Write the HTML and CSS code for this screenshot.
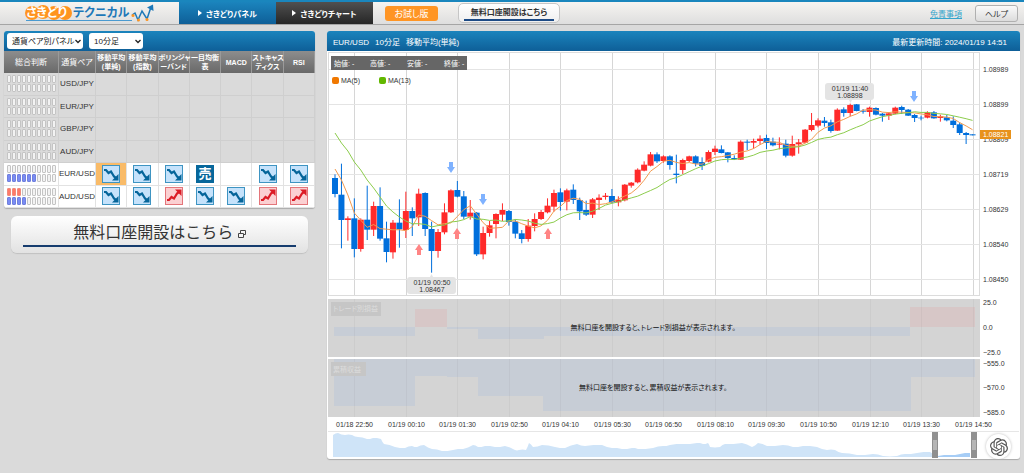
FILE: index.html
```
<!DOCTYPE html>
<html lang="ja">
<head>
  <meta charset="UTF-8" />
  <meta name="viewport" content="width=device-width, initial-scale=1.0" />
  <title>さきどりテクニカル</title>
  <link rel="stylesheet" href="styles.css">
</head>
<body>
  <svg class="symbols" aria-hidden="true">
    <symbol id="down" viewBox="0 0 18 18">
      <rect x="0.5" y="0.5" width="17" height="17" fill="#c5e2fb" stroke="#3e94c2"/>
      <path d="M2 5H4L6.500 8L9 6.500L12 11.500L14 13" fill="none" stroke="#05659a" stroke-width="2.200"/>
      <path d="M16.500 9V15.500H10Z" fill="#05659a"/>
    </symbol>
    <symbol id="up" viewBox="0 0 18 18">
      <rect x="0.5" y="0.5" width="17" height="17" fill="#fbd0d2" stroke="#e4757a"/>
      <path d="M2 13H4L6.500 10L9 11.500L12 6.500L14 5" fill="none" stroke="#dc1c26" stroke-width="2.200"/>
      <path d="M16.500 9V2.500H10Z" fill="#dc1c26"/>
    </symbol>
  </svg>

  <header class="topbar">
    <a class="logo" href="#" aria-label="さきどりテクニカル">
      <svg width="132" height="20" viewBox="0 0 132 20">
        <path d="M4 17.500H110" stroke="#4a9ad0" stroke-width="1"/>
        <g fill="#ff941f"><circle cx="10" cy="10" r="7"/><circle cx="21" cy="9" r="7"/><circle cx="32" cy="10" r="7"/><circle cx="43" cy="10" r="7"/></g>
        <text class="logo-a" x="4" y="14">さきどり</text>
        <text class="logo-b" x="51" y="14">テクニカル</text>
        <path d="M110 12L113 10L116 17L120 8L125 16L129 4" fill="none" stroke="#1d78b8" stroke-width="1.500"/>
        <path d="M125 4.500L131 1.500L131.500 8Z" fill="#1d78b8"/>
        <g fill="#ff941f"><circle cx="111" cy="12.500" r="1.500"/><circle cx="116.500" cy="17" r="1.500"/><circle cx="125" cy="16.500" r="1.500"/></g>
      </svg>
    </a>
    <nav class="tabs">
      <a class="tab tab-on" href="#"><span class="tri"></span>さきどりパネル</a>
      <a class="tab" href="#"><span class="tri"></span>さきどりチャート</a>
    </nav>
    <button class="trial">お試し版</button>
    <button class="open-small"><span>無料口座開設はこちら</span></button>
    <a class="terms" href="#">免責事項</a>
    <button class="help">ヘルプ</button>
  </header>

  <main class="layout">
    <aside class="side">
      <section class="panel">
        <div class="bar filters">
          <select class="sel sel-panel" aria-label="パネル"><option>通貨ペア別パネル</option></select>
          <select class="sel sel-time" aria-label="足種"><option>10分足</option></select>
        </div>
        <table class="signals">
          <colgroup><col class="c-total"><col class="c-pair"><col><col><col><col><col><col><col></colgroup>
          <thead>
            <tr>
              <th class="big">総合判断</th><th class="big">通貨ペア</th><th>移動平均<br>(単純)</th><th>移動平均<br>(指数)</th>
              <th>ボリンジャ<br>ーバンド</th><th>一目均衡<br>表</th><th>MACD</th><th>ストキャス<br>ティクス</th><th>RSI</th>
            </tr>
          </thead>
          <tbody>
            <tr class="off"><td><div class="meter" data-buy="0" data-sell="0"></div></td><td>USD/JPY</td><td></td><td></td><td></td><td></td><td></td><td></td><td></td></tr>
            <tr class="off"><td><div class="meter" data-buy="0" data-sell="0"></div></td><td>EUR/JPY</td><td></td><td></td><td></td><td></td><td></td><td></td><td></td></tr>
            <tr class="off"><td><div class="meter" data-buy="0" data-sell="0"></div></td><td>GBP/JPY</td><td></td><td></td><td></td><td></td><td></td><td></td><td></td></tr>
            <tr class="off"><td><div class="meter" data-buy="0" data-sell="0"></div></td><td>AUD/JPY</td><td></td><td></td><td></td><td></td><td></td><td></td><td></td></tr>
            <tr>
              <td><div class="meter" data-buy="0" data-sell="6"></div></td><td>EUR/USD</td>
              <td class="picked"><svg class="sig"><use href="#down"/></svg></td>
              <td><svg class="sig"><use href="#down"/></svg></td>
              <td><svg class="sig"><use href="#down"/></svg></td>
              <td><span class="sell">売</span></td>
              <td></td>
              <td><svg class="sig"><use href="#down"/></svg></td>
              <td><svg class="sig"><use href="#down"/></svg></td>
            </tr>
            <tr>
              <td><div class="meter" data-buy="3" data-sell="4"></div></td><td>AUD/USD</td>
              <td><svg class="sig"><use href="#down"/></svg></td>
              <td><svg class="sig"><use href="#down"/></svg></td>
              <td><svg class="sig"><use href="#up"/></svg></td>
              <td><svg class="sig"><use href="#down"/></svg></td>
              <td><svg class="sig"><use href="#down"/></svg></td>
              <td><svg class="sig"><use href="#up"/></svg></td>
              <td><svg class="sig"><use href="#up"/></svg></td>
            </tr>
          </tbody>
        </table>
      </section>
      <a class="open-big" href="#">
        <span class="open-text">無料口座開設はこちら
          <svg width="8" height="8" viewBox="0 0 8 8" fill="#f4f4f4" stroke="#444"><path d="M2.500 0.500H7.500V4.500H2.500Z"/><path d="M0.500 3.500H5.500V7.500H0.500Z"/></svg>
        </span>
      </a>
    </aside>

    <section class="panel chart-panel">
      <div class="bar chart-head">
        <h1><span>EUR/USD</span><span>10分足</span><span>移動平均(単純)</span></h1>
        <p>最新更新時間: <time>2024/01/19 14:51</time></p>
      </div>
      <svg id="chart" class="chart" viewBox="327 51 693 408"></svg>
      <button class="chat" aria-label="チャット">
        <svg width="18" height="18" viewBox="0 0 24 24" fill="#555"><path d="M22.2819 9.8211a5.9847 5.9847 0 0 0-.5157-4.9108 6.0462 6.0462 0 0 0-6.5098-2.9A6.0651 6.0651 0 0 0 4.9807 4.1818a5.9847 5.9847 0 0 0-3.9977 2.9 6.0462 6.0462 0 0 0 .7427 7.0966 5.98 5.98 0 0 0 .511 4.9107 6.051 6.051 0 0 0 6.5146 2.9001A5.9847 5.9847 0 0 0 13.2599 24a6.0557 6.0557 0 0 0 5.7718-4.2058 5.9894 5.9894 0 0 0 3.9977-2.9001 6.0557 6.0557 0 0 0-.7475-7.0729zm-9.022 12.6081a4.4755 4.4755 0 0 1-2.8764-1.0408l.1419-.0804 4.7783-2.7582a.7948.7948 0 0 0 .3927-.6813v-6.7369l2.02 1.1686a.071.071 0 0 1 .038.052v5.5826a4.504 4.504 0 0 1-4.4945 4.4944zm-9.6607-4.1254a4.4708 4.4708 0 0 1-.5346-3.0137l.142.0852 4.783 2.7582a.7712.7712 0 0 0 .7806 0l5.8428-3.3685v2.3324a.0804.0804 0 0 1-.0332.0615L9.74 19.9502a4.4992 4.4992 0 0 1-6.1408-1.6464zM2.3408 7.8956a4.485 4.485 0 0 1 2.3655-1.9728V11.6a.7664.7664 0 0 0 .3879.6765l5.8144 3.3543-2.0201 1.1685a.0757.0757 0 0 1-.071 0l-4.8303-2.7865A4.504 4.504 0 0 1 2.3408 7.872zm16.5963 3.8558L13.1038 8.364 15.1192 7.2a.0757.0757 0 0 1 .071 0l4.8303 2.7913a4.4944 4.4944 0 0 1-.6765 8.1042v-5.6772a.79.79 0 0 0-.407-.667zm2.0107-3.0231l-.142-.0852-4.7735-2.7818a.7759.7759 0 0 0-.7854 0L9.409 9.2297V6.8974a.0662.0662 0 0 1 .0284-.0615l4.8303-2.7866a4.4992 4.4992 0 0 1 6.6802 4.66zM8.3065 12.863l-2.02-1.1638a.0804.0804 0 0 1-.038-.0567V6.0742a4.4992 4.4992 0 0 1 7.3757-3.4537l-.142.0805L8.704 5.459a.7948.7948 0 0 0-.3927.6813zm1.0976-2.3654l2.602-1.4998 2.6069 1.4998v2.9994l-2.5974 1.4997-2.6067-1.4997Z"/></svg>
      </button>
    </section>
  </main>
  <script src="chart.js"></script>
</body>
</html>
```
FILE: styles.css
```
* {
  box-sizing: border-box;
}
body {
  margin: 0;
  min-height: 100vh;
  background: #dadada;
  color: #333;
  font-family: "Liberation Sans", "Noto Sans CJK JP", sans-serif;
  font-size: 8px;
  font-feature-settings: "palt";
}
button, select {
  font: inherit;
  font-feature-settings: inherit;
}
button {
  cursor: pointer;
  padding: 0;
}
.symbols {
  position: absolute;
  width: 0;
  height: 0;
}

/* header */
.topbar {
  display: flex;
  align-items: center;
  height: 25px;
  padding-right: 6px;
  background: linear-gradient(#f6f4f1, #dedede);
  border-top: 2px solid #1a86bd;
  border-bottom: 1px solid #a5a5a5;
}
.logo {
  width: 179px;
  height: 20px;
  padding-left: 22px;
}
.logo-a, .logo-b {
  font-size: 12px;
  font-weight: bold;
}
.logo-a {
  fill: #fff;
}
.logo-b {
  fill: #1d78b8;
}
.tabs {
  display: flex;
  align-self: stretch;
}
.tab {
  display: flex;
  align-items: center;
  justify-content: center;
  gap: 4px;
  width: 97px;
  background: linear-gradient(#505050, #262626);
  color: #fff;
  font-weight: bold;
  text-decoration: none;
}
.tab-on {
  background: linear-gradient(#1b84bd, #0e5f98);
}
.tri {
  border: 3px solid transparent;
  border-left: 4px solid #fff;
  border-right: 0;
}
.trial {
  width: 53px;
  height: 15px;
  margin-left: 12px;
  border: 0;
  border-radius: 3px;
  background: #ff9524;
  color: #fff;
  font-size: 9px;
}
.open-small {
  width: 102px;
  height: 20px;
  margin-left: 20px;
  border: 1px solid #c6c6c6;
  border-radius: 5px;
  background: linear-gradient(#fff, #efefef);
  color: #333;
  font-weight: bold;
}
.open-small span {
  display: block;
  margin: 0 5px;
  line-height: 13px;
  border-bottom: 2px solid #1c4a85;
}
.terms {
  margin-left: auto;
  color: #35a5cc;
}
.help {
  width: 43px;
  height: 17px;
  margin-left: 13px;
  border: 1px solid #b0b0b0;
  border-radius: 3px;
  background: linear-gradient(#fafafa, #dcdcdc);
  color: #333;
}

/* panels */
.layout {
  display: grid;
  grid-template-columns: 311px minmax(0, 1fr);
  align-items: start;
  gap: 12px;
  padding: 6px 4px;
}
.panel {
  border-radius: 3px;
  overflow: hidden;
  background: #fff;
  box-shadow: 0 1px 1px #aaa;
}
.bar {
  display: flex;
  align-items: center;
  height: 20px;
  background: linear-gradient(#1b84bd, #0e5f98);
  color: #fff;
}
.filters {
  gap: 6px;
  padding: 0 3px;
}
.sel {
  appearance: none;
  height: 16px;
  padding: 0 5px;
  border: 0;
  border-radius: 3px;
  background: #fff url("data:image/svg+xml,%3Csvg xmlns='http://www.w3.org/2000/svg' width='6' height='5'%3E%3Cpath d='M.5 1L3 3.500L5.500 1' fill='none' stroke='%23222' stroke-width='1.300'/%3E%3C/svg%3E") no-repeat right 2px center;
  color: #222;
}
.sel-panel {
  width: 76px;
}
.sel-time {
  width: 54px;
}

/* signal table */
.signals {
  width: 100%;
  height: 157px;
  table-layout: fixed;
  border-collapse: separate;
  border-spacing: 0;
}
.signals tr {
  height: 22px;
}
.c-total {
  width: 55px;
}
.c-pair {
  width: 37px;
}
.signals th {
  padding: 0;
  border-right: 1px solid #9a9a9a;
  background: linear-gradient(#8d8d8d, #696969);
  color: #fff;
  font-size: 7px;
  line-height: 9px;
  white-space: nowrap;
}
.signals .big {
  font-size: 8px;
  font-weight: normal;
}
.signals td {
  padding: 0;
  border-right: 1px solid #e2e2e2;
  border-bottom: 1px solid #e2e2e2;
  text-align: center;
  white-space: nowrap;
}
.signals .off td {
  background: #dadada;
  border-color: #cfcfcf;
}
.signals .picked {
  background: #f9bb68;
}
.meter {
  display: grid;
  grid-template-columns: repeat(10, 4px);
  gap: 1px;
  justify-content: center;
}
.meter i {
  height: 8px;
  border: 1px solid #c4c4c4;
  border-radius: 1px;
  background: #f3f3f3;
}
.meter .buy {
  border-color: #f08a7c;
  background: #ff7a68;
}
.meter .sel-on {
  border-color: #7080dc;
  background: #7a8cf4;
}
.sig, .sell {
  display: block;
  width: 18px;
  height: 18px;
  margin: 0 auto;
}
.sell {
  background: #07679b;
  color: #fff;
  font-size: 13px;
  font-weight: bold;
  line-height: 17px;
}

.open-big {
  display: block;
  margin: 8px 7px 0;
  padding: 4px 12px 6px;
  border-radius: 6px;
  background: linear-gradient(#fff, #e2e2e2);
  box-shadow: 0 1px 1px #c0c0c0;
  color: #333;
  font-size: 16px;
  line-height: 25px;
  text-align: center;
  text-decoration: none;
  font-feature-settings: normal;
}
.open-text {
  display: block;
  border-bottom: 2px solid #163c6e;
}

/* chart */
.chart-panel {
  position: relative;
}
.chart-head {
  justify-content: space-between;
  padding: 0 13px 0 6px;
}
.chart-head h1 {
  display: flex;
  align-items: baseline;
  gap: 6px;
  margin: 0;
  font-size: 8px;
  font-weight: normal;
}
.chart-head p {
  margin: 0;
}
.chart {
  display: block;
  width: 100%;
  height: auto;
  font-size: 7px;
}
.chart .mid {
  text-anchor: middle;
}
.chart .ink {
  fill: #333;
}
.chart .note {
  fill: #111;
  text-anchor: middle;
}
.chart .white {
  fill: #fff;
}
.chart .faint {
  fill: #dcdcdc;
}
.chat {
  position: absolute;
  right: 9px;
  bottom: 0;
  display: flex;
  align-items: center;
  justify-content: center;
  width: 25px;
  height: 25px;
  border: 0;
  border-radius: 50%;
  background: #fff;
  box-shadow: 0 0 3px #bbb;
}
```
FILE: chart.js
```
// total judgement meters
document.querySelectorAll('.meter').forEach(m => {
  for (let i = 0; i < 20; i++) {
    const cell = document.createElement('i');
    if (i < 10 && i < +m.dataset.buy) cell.className = 'buy';
    if (i >= 10 && i - 10 < +m.dataset.sell) cell.className = 'sel-on';
    m.appendChild(cell);
  }
});

const chart = document.getElementById('chart');
const UP = '#ff2a2a';
const DOWN = '#006fdc';

function add(tag, attrs, text) {
  const el = document.createElementNS('http://www.w3.org/2000/svg', tag);
  for (const k in attrs) el.setAttribute(k, attrs[k]);
  if (text) el.textContent = text;
  chart.appendChild(el);
}
const rect = (x, y, w, h, fill, rx = 0) => add('rect', { x, y, width: w, height: h, fill, rx });
const line = (x1, y1, x2, y2, stroke = '#dcdcdc') => add('line', { x1, y1, x2, y2, stroke, 'stroke-width': 1 });
const label = (x, y, text, cls = 'ink') => add('text', { x, y, class: cls }, text);

// [direction, body top, body bottom, high, low], a third of a pixel per unit, from each block's base
const blocks = [
  { base: 330, rows: [
    [0,204,252,193,262],[0,254,330,161,415],[1,325,330,319,392],[0,325,417,265,442],[1,329,417,325,425],
    [0,329,359,227,390],[1,288,359,275,378],[0,288,386,232,392],[0,385,426,335,457],[1,338,427,330,446],
    [0,338,358,268,413],[1,303,360,245,384],[0,303,325,292,378],[1,251,322,236,348],[0,249,357,247,378],
    [0,357,423,335,488],[1,366,423,357,443],[1,307,367,280,373],[1,241,307,238,309],[0,240,260,213,262],
    [0,259,320,243,327],[1,308,320,270,329],[0,308,433,306,438],[1,369,433,350,448],[1,346,369,333,380]
  ] },
  { base: 390, rows: [
    [1,252,282,250,325],[1,240,254,220,273],[0,243,276,240,287],[0,275,311,268,325],[0,310,327,300,340],
    [1,287,327,267,335],[1,267,288,250,304],[1,246,267,240,270],[1,227,247,205,250],[1,189,230,179,245],
    [0,187,216,175,242],[1,181,215,176,241],[0,179,210,163,222],[0,210,244,203,270],[0,240,254,212,258],
    [1,208,254,204,264],[1,203,210,193,240],[1,197,201,189,209],[0,198,217,177,220],[1,209,217,199,229],
    [1,164,211,162,214],[1,158,167,156,173],[1,119,157,115,160],[1,104,122,94,124],[1,73,107,66,109]
  ] },
  { base: 240, rows: [
    [0,223,244,217,249],[1,229,243,226,248],[0,229,255,226,269],[0,281,285,224,310],[1,240,270,236,282],
    [1,229,243,227,246],[0,229,251,226,259],[0,246,258,232,270],[1,216,245,211,247],[1,206,216,197,225],
    [0,208,219,196,220],[0,217,234,216,247],[0,234,238,226,240],[1,185,239,181,240],[0,185,188,179,210],
    [1,183,188,176,206],[1,176,183,166,194],[0,174,189,164,207],[0,185,196,173,199],[1,191,194,172,208],
    [0,191,227,179,232],[1,192,227,167,230],[1,187,193,177,221],[1,149,188,147,190],[1,135,150,99,154],
    [1,121,137,115,142],[0,122,129,111,140],[0,127,153,119,158]
  ] },
  { base: 225, rows: [
    [1,104,167,100,168],[0,103,114,97,125],[1,90,114,86,124],[0,88,108,87,109],[0,107,110,102,116],
    [1,98,111,95,125],[0,99,119,97,121],[0,116,122,114,140],[1,115,122,111,135],[1,98,116,95,118],
    [0,96,105,92,117],[0,104,122,102,123],[0,120,129,117,141],[0,128,130,122,136],[1,112,128,109,130],
    [0,112,130,108,131],[1,124,129,119,140],[0,127,136,120,139],[0,137,150,124,159],[0,148,174,142,180],
    [0,174,180,171,207],[0,178,181,178,181]
  ] }
];
const candles = blocks.flatMap(b => b.rows.map(r => [r[0], ...r.slice(1).map(v => (v + b.base) / 3)]));
const cx = i => 335 + i * 6.44;

// grid and axis labels
const times = ['01/18 22:50', '01/19 00:10', '01/19 01:30', '01/19 02:50', '01/19 04:10', '01/19 05:30', '01/19 06:50',
  '01/19 08:10', '01/19 09:30', '01/19 10:50', '01/19 12:10', '01/19 13:30', '01/19 14:50'];
times.forEach((t, n) => {
  const x = Math.round(cx(3 + n * 8)) + 0.5;
  line(x, 53, x, 295, '#d6d6d6');
  label(x, 427, t, 'mid ink');
});
['1.08989', '1.08899', '1.08809', '1.08719', '1.08629', '1.08540', '1.08450'].forEach((p, n) => {
  const y = Math.round(68.5 + n * 35.1) + 0.5;
  line(328, y, 980, y, '#e4e4e4');
  label(983, y + 2, p);
});
line(328, 52.5, 980, 52.5);
line(328, 295.5, 980, 295.5);
line(328.5, 52, 328.5, 295);
line(979.5, 52, 979.5, 295);

// candles
candles.forEach(([up, top, bottom, high, low], i) => {
  const color = up ? UP : DOWN;
  rect(cx(i) - 0.5, high, 1, low - high, color);
  rect(cx(i) - 3, top, 6, bottom - top, color);
});

const closes = candles.map(c => c[0] ? c[1] : c[2]);
function average(n, head, stroke) {
  const pts = closes.map((c, i) => {
    const y = i < n - 1 ? head[i] : closes.slice(i - n + 1, i + 1).reduce((a, b) => a + b) / n;
    return cx(i) + ',' + y;
  });
  add('polyline', { points: pts.join(' '), fill: 'none', stroke, 'stroke-width': 1 });
}
average(5, [169, 180, 195, 213], '#f29b50');
average(13, [133, 143, 151, 162, 170, 180, 188, 197, 206, 212, 217, 221], '#8ccc4c');

// signal arrows
[[451, 162], [483, 194], [914, 91]].forEach(([x, y]) =>
  add('path', { d: `M${x - 2} ${y}h4v5h2l-4 6l-4-6h2z`, fill: '#7fb2ff' }));
[[419, 255], [457, 239], [548, 239]].forEach(([x, y]) =>
  add('path', { d: `M${x - 2} ${y}h4v-5h2l-4-6l-4 6h2z`, fill: '#ff8585' }));

// high and low balloons
rect(407, 277, 49, 17, '#e4e4e4', 3);
add('path', { d: 'M430 277l1.5-3l1.5 3z', fill: '#e4e4e4' });
label(432, 285, '01/19 00:50', 'mid ink');
label(432, 292, '1.08467', 'mid ink');
rect(825, 83, 49, 17, '#e4e4e4', 3);
add('path', { d: 'M849 100l1.5 3l1.5-3z', fill: '#e4e4e4' });
label(850, 91, '01/19 11:40', 'mid ink');
label(850, 98, '1.08898', 'mid ink');

// current price
rect(980, 130, 31, 9, '#e8921c');
label(983, 137, '1.08821', 'white');

// ohlc box and legend
rect(331, 56, 136, 14, '#666');
[[334, '始値: -'], [370, '高値: -'], [407, '安値: -'], [444, '終値: -']].forEach(([x, t]) => label(x, 66, t, 'white'));
rect(332, 77, 7, 7, '#f07800', 2);
label(341, 83, 'MA(5)');
rect(379, 77, 7, 7, '#62b800', 2);
label(388, 83, 'MA(13)');

// profit panes
rect(328, 299, 652, 58, '#d4d4d4');
rect(328, 359, 652, 58, '#d4d4d4');
[[334, 327, 81, 9, 0], [415, 309, 32, 18, 1], [447, 327, 31, 2, 0], [478, 327, 66, 12, 0], [544, 327, 366, 9, 0], [910, 307, 65, 20, 1],
 [334, 359, 81, 47, 0], [415, 359, 32, 17, 0], [447, 359, 31, 18, 0], [478, 359, 65, 37, 0], [543, 359, 368, 52, 0], [911, 359, 64, 18, 0]
].forEach(([x, y, w, h, plus]) => rect(x, y, w, h, plus ? '#d7c7c7' : '#c7cdd6'));
times.forEach((t, n) => {
  const x = Math.round(cx(3 + n * 8)) + 0.5;
  line(x, 299, x, 357, 'rgba(120,120,120,0.08)');
  line(x, 359, x, 417, 'rgba(120,120,120,0.08)');
});
rect(331, 302, 50, 14, '#c6c6c6');
label(333, 311, 'トレード別損益', 'faint');
rect(331, 362, 35, 14, '#c6c6c6');
label(333, 372, '累積収益', 'faint');
label(653, 330, '無料口座を開設すると、トレード別損益が表示されます。', 'note');
label(653, 390, '無料口座を開設すると、累積収益が表示されます。', 'note');
[['25.0', 305], ['0.0', 330], ['−25.0', 355], ['−555.0', 366], ['−570.0', 390], ['−585.0', 415]].forEach(([t, y]) => label(983, y, t));

// navigator
line(328, 431.5, 1019, 431.5, '#e6e6e6');
const history = [333,435,338,433,345,435,352,435,358,437,367,439,373,438,381,439,384,444,395,447,405,448,412,446,417,447,424,445,
  432,449,442,451,453,450,463,449,473,445,478,447,485,446,495,447,505,446,515,450,519,450,526,450,529,443,533,447,542,445,555,447,565,448,
  577,444,585,446,602,445,612,448,622,449,632,448,638,449,653,448,663,446,670,445,683,444,697,443,703,444,708,443,710,447,720,447,
  725,444,742,443,752,447,758,443,767,446,783,445,793,447,803,446,817,447,827,450,835,450,842,453,857,455,873,454,883,456,897,456,
  905,454,917,453,930,452,938,456];
const recent = [938,456,950,455,960,454,970,453];
// small steps between the sampled points
function area(list, fill) {
  let d = `M${list[0]} 457`;
  for (let i = 0; i < list.length; i += 2) {
    d += `L${list[i]} ${list[i + 1]}`;
    if (i + 3 < list.length) d += `L${(list[i] + list[i + 2]) / 2} ${(list[i + 1] + list[i + 3]) / 2 + (i % 4 ? 0.6 : -0.6)}`;
  }
  add('path', { d: d + `L${list[list.length - 2]} 457Z`, fill });
}
area(history, '#cfe4f8');
area(recent, '#a6cdf6');
[932, 971].forEach(x => {
  rect(x, 432, 6, 26, '#909090');
  line(x + 2, 440, x + 2, 450);
  line(x + 4, 440, x + 4, 450);
});
```
